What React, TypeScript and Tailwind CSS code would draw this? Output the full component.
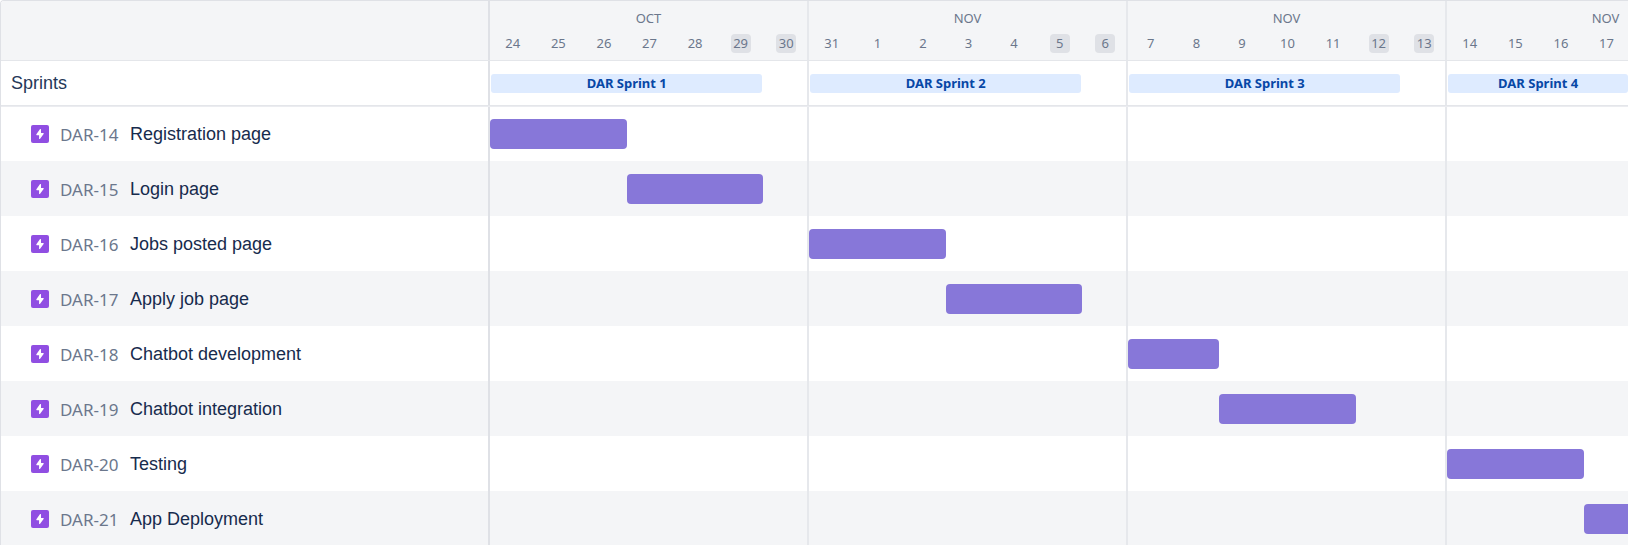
import React from "react";

type Issue = { id: string; title: string; start: number; days: number };

const weeks = [
  { month: "OCT", days: [24, 25, 26, 27, 28, 29, 30] },
  { month: "NOV", days: [31, 1, 2, 3, 4, 5, 6] },
  { month: "NOV", days: [7, 8, 9, 10, 11, 12, 13] },
  { month: "NOV", days: [14, 15, 16, 17] },
];

const issues: Issue[] = [
  { id: "DAR-14", title: "Registration page", start: 1, days: 3 },
  { id: "DAR-15", title: "Login page", start: 4, days: 3 },
  { id: "DAR-16", title: "Jobs posted page", start: 8, days: 3 },
  { id: "DAR-17", title: "Apply job page", start: 11, days: 3 },
  { id: "DAR-18", title: "Chatbot development", start: 15, days: 2 },
  { id: "DAR-19", title: "Chatbot integration", start: 17, days: 3 },
  { id: "DAR-20", title: "Testing", start: 22, days: 3 },
  { id: "DAR-21", title: "App Deployment", start: 25, days: 3 },
];

function EpicIcon() {
  return (
    <svg className="size-[18px] shrink-0" viewBox="0 0 16 16" role="img" aria-label="Epic">
      <rect width="16" height="16" rx="1.8" fill="#904ee2" />
      <path
        d="M11.4 7.5c-.1-.3-.3-.5-.6-.5H8.9V4c0-.3-.2-.5-.5-.5-.2 0-.4.1-.5.3L4.8 8.2c-.1.1-.1.2-.1.3 0 .3.2.5.5.5h2v3c0 .3.2.5.5.5.2 0 .3-.1.4-.2l3.1-4.4c.1-.1.2-.3.2-.4z"
        fill="#fff"
      />
    </svg>
  );
}

/* One line of the timeline: week separators with any bar laid over them. */
function Track({ children }: { children?: React.ReactNode }) {
  return (
    <div className="min-w-0 flex-1 overflow-hidden">
      <div className="grid h-full w-[1276px] grid-cols-[repeat(28,minmax(0,1fr))] items-center">
        {weeks.map((week, i) => (
          <div
            key={week.days[0]}
            className="row-start-1 self-stretch border-r-2 border-[#e6e8ec]"
            style={{ gridColumn: `${i * 7 + 1} / span 7` }}
          />
        ))}
        {children}
      </div>
    </div>
  );
}

const side = "w-[489px] shrink-0 border-r-2 border-[#dfe1e6]";

export default function App() {
  return (
    <main className="h-screen overflow-hidden rounded-tl border-t border-l border-[#dfe1e6] bg-white font-['Noto_Sans',sans-serif]">
      <header className="flex h-[60px] border-b border-[#e4e6ea] bg-[#f4f5f7] text-[13px] leading-[19px] text-[#6b778c]">
        <div className={side} />
        <div className="flex min-w-0 flex-1 overflow-hidden">
          {weeks.map((week) => (
            <div key={week.days[0]} className="flex w-[319px] shrink-0 flex-col gap-[6px] border-r-2 border-[#e6e8ec] pt-2 text-center">
              <div>{week.month}</div>
              <div className="-mr-0.5 grid grid-cols-7 justify-items-center">
                {week.days.map((day, i) => (
                  <span key={day} className={i > 4 ? "w-5 rounded bg-[#dfe1e6]" : "w-5"}>
                    {day}
                  </span>
                ))}
              </div>
            </div>
          ))}
        </div>
      </header>

      <section className="relative flex h-[45px] border-b border-[#e4e6ea] shadow-[0_1px_0_#ebecf0]">
        <h2 className={`${side} flex items-center pl-[10px] font-['Liberation_Sans',sans-serif] text-[18px] leading-6 text-[#253858]`}>
          Sprints
        </h2>
        <Track>
          {weeks.map((week, i) => (
            <div
              key={week.days[0]}
              className="row-start-1 mx-px rounded-[3px] bg-[#deebff] text-center text-[13px] leading-[19px] font-bold text-[#0747a6]"
              style={{ gridColumn: `${i * 7 + 1} / span ${i === 3 ? 4 : 6}` }}
            >
              DAR Sprint {i + 1}
            </div>
          ))}
        </Track>
      </section>

      <ul>
        {issues.map((issue) => (
          <li key={issue.id} className="flex h-[55px] even:bg-[#f4f5f7]">
            <div className={`${side} flex items-center pl-[30px]`}>
              <EpicIcon />
              <a href={`#${issue.id}`} className="w-[81px] pt-[3px] pl-[11px] text-[17px] leading-6 whitespace-nowrap text-[#6b778c]">
                {issue.id}
              </a>
              <span className="font-['Liberation_Sans',sans-serif] text-[18px] leading-6 text-[#172b4d]">{issue.title}</span>
            </div>
            <Track>
              <div
                className="row-start-1 h-[30px] rounded bg-[#8777d9]"
                style={{ gridColumn: `${issue.start} / span ${issue.days}` }}
              />
            </Track>
          </li>
        ))}
      </ul>
    </main>
  );
}
